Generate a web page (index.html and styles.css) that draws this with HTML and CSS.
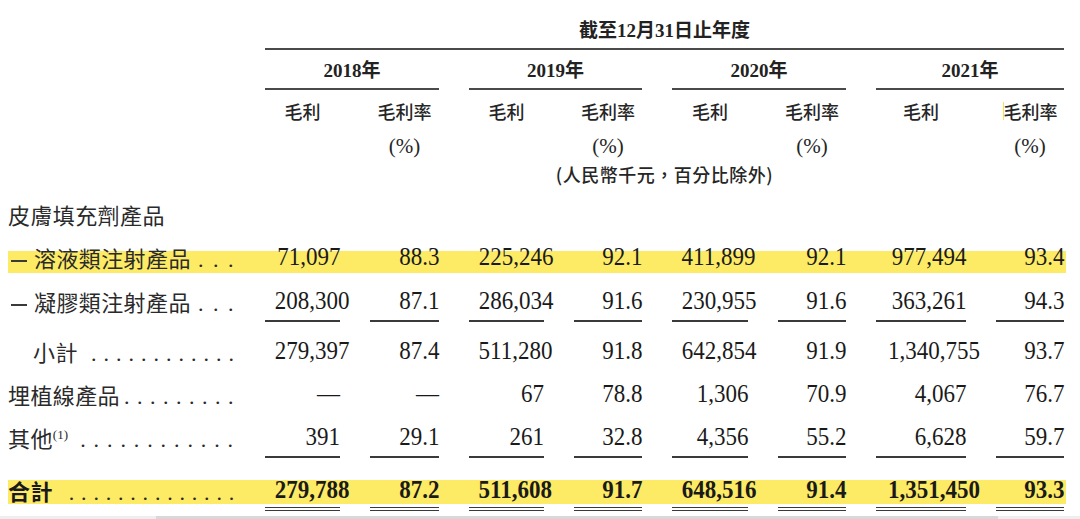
FILE: index.html
```html
<!DOCTYPE html>
<html lang="zh-Hant">
<head>
<meta charset="utf-8">
<title>毛利</title>
<link rel="stylesheet" href="styles.css">
</head>
<body>
<div class="sheet">
  <div class="grid">
    <div class="title">截至12月31日止年度</div>
  </div>
  <div class="grid">
    <div class="yr y18">2018年</div>
    <div class="yr y19">2019年</div>
    <div class="yr y20">2020年</div>
    <div class="yr y21">2021年</div>
  </div>
  <div class="grid sub">
    <div></div>
    <div class="hd">毛利</div><div class="hd">毛利率</div>
    <div class="hd">毛利</div><div class="hd">毛利率</div>
    <div class="hd">毛利</div><div class="hd">毛利率</div>
    <div class="hd">毛利</div><div class="hd"><span class="mark">毛利率</span></div>
  </div>
  <div class="grid pct">
    <div></div>
    <div></div><div class="pc">(%)</div>
    <div></div><div class="pc">(%)</div>
    <div></div><div class="pc">(%)</div>
    <div></div><div class="pc">(%)</div>
  </div>
  <div class="grid rmb-row">
    <div class="rmb">(人民幣千元，百分比除外)</div>
  </div>
  <div class="section">皮膚填充劑產品</div>

  <div class="grid row h44 hl">
    <div class="lab"><span class="t"><span class="dash"></span>溶液類注射產品</span><span class="dots wide">...</span></div>
    <div class="c"><span class="n">71,097</span></div>
    <div class="c"><span class="n">88.3</span></div>
    <div class="c"><span class="n">225,246</span></div>
    <div class="c"><span class="n">92.1</span></div>
    <div class="c"><span class="n">411,899</span></div>
    <div class="c"><span class="n">92.1</span></div>
    <div class="c"><span class="n">977,494</span></div>
    <div class="c"><span class="n">93.4</span></div>
  </div>

  <div class="grid row h50">
    <div class="lab"><span class="t"><span class="dash"></span>凝膠類注射產品</span><span class="dots wide">...</span></div>
    <div class="c u"><span class="n">208,300</span></div>
    <div class="c u"><span class="n">87.1</span></div>
    <div class="c u"><span class="n">286,034</span></div>
    <div class="c u"><span class="n">91.6</span></div>
    <div class="c u"><span class="n">230,955</span></div>
    <div class="c u"><span class="n">91.6</span></div>
    <div class="c u"><span class="n">363,261</span></div>
    <div class="c u"><span class="n">94.3</span></div>
  </div>

  <div class="grid row h43">
    <div class="lab"><span class="t indent">小計</span><span class="dots d125">............</span></div>
    <div class="c"><span class="n">279,397</span></div>
    <div class="c"><span class="n">87.4</span></div>
    <div class="c"><span class="n">511,280</span></div>
    <div class="c"><span class="n">91.8</span></div>
    <div class="c"><span class="n">642,854</span></div>
    <div class="c"><span class="n">91.9</span></div>
    <div class="c"><span class="n">1,340,755</span></div>
    <div class="c"><span class="n">93.7</span></div>
  </div>

  <div class="grid row h43">
    <div class="lab"><span class="t">埋植線產品</span><span class="dots d13">.........</span></div>
    <div class="c"><span class="n">—</span></div>
    <div class="c"><span class="n">—</span></div>
    <div class="c"><span class="n">67</span></div>
    <div class="c"><span class="n">78.8</span></div>
    <div class="c"><span class="n">1,306</span></div>
    <div class="c"><span class="n">70.9</span></div>
    <div class="c"><span class="n">4,067</span></div>
    <div class="c"><span class="n">76.7</span></div>
  </div>

  <div class="grid row h53">
    <div class="lab"><span class="t">其他<sup class="sup">(1)</sup></span><span class="dots d134">............</span></div>
    <div class="c u"><span class="n">391</span></div>
    <div class="c u"><span class="n">29.1</span></div>
    <div class="c u"><span class="n">261</span></div>
    <div class="c u"><span class="n">32.8</span></div>
    <div class="c u"><span class="n">4,356</span></div>
    <div class="c u"><span class="n">55.2</span></div>
    <div class="c u"><span class="n">6,628</span></div>
    <div class="c u"><span class="n">59.7</span></div>
  </div>

  <div class="grid row h48 hl-tot total">
    <div class="lab"><span class="t bold">合計</span><span class="dots d123">..............</span></div>
    <div class="c dbl"><span class="n">279,788</span></div>
    <div class="c dbl"><span class="n">87.2</span></div>
    <div class="c dbl"><span class="n">511,608</span></div>
    <div class="c dbl"><span class="n">91.7</span></div>
    <div class="c dbl"><span class="n">648,516</span></div>
    <div class="c dbl"><span class="n">91.4</span></div>
    <div class="c dbl"><span class="n">1,351,450</span></div>
    <div class="c dbl"><span class="n">93.3</span></div>
  </div>

  <div class="scroll"><div class="thumb"></div></div>
</div>
</body>
</html>
```

FILE: styles.css
```css
html, body {
  margin: 0;
  padding: 0;
  background: #ffffff;
}

body {
  color: #1c1c1c;
  font-family: "Liberation Serif", "Noto Sans CJK TC", serif;
}

.sheet {
  width: 1080px;
  height: 519px;
  overflow: hidden;
}

.grid {
  display: grid;
  grid-template-columns: 227px 75px 69px 75px 68px 76px 68px 90px 68px;
  column-gap: 30px;
  margin-left: 8px;
  width: 1056px;
  padding-right: 2px;
}

/* header */
.title {
  grid-column: 2 / -1;
  padding-top: 14px;
  line-height: 34px;
  border-bottom: 2px solid #4a4a4a;
  text-align: center;
  font-family: "Liberation Serif", "Noto Sans CJK TC", serif;
  font-weight: 700;
  font-size: 19px;
  color: #222;
}

.yr {
  padding-top: 4px;
  line-height: 34px;
  border-bottom: 2px solid #4a4a4a;
  text-align: center;
  font-family: "Liberation Serif", "Noto Sans CJK TC", serif;
  font-weight: 700;
  font-size: 19px;
  color: #222;
}

.y18 { grid-column: 2 / 4; }
.y19 { grid-column: 4 / 6; }
.y20 { grid-column: 6 / 8; }
.y21 { grid-column: 8 / 10; }

.sub .hd {
  line-height: 42px;
  text-align: center;
  font-family: "Noto Sans CJK TC", sans-serif;
  font-weight: 500;
  font-size: 18px;
  color: #262626;
}

.mark {
  display: inline-block;
  line-height: 18px;
  border-left: 1px solid #f2e25c;
}

.pct .pc {
  line-height: 28px;
  text-align: center;
  font-family: "Liberation Serif", serif;
  font-size: 21px;
  color: #262626;
}

.rmb {
  grid-column: 2 / -1;
  line-height: 28px;
  text-align: center;
  font-family: "Noto Sans CJK TC", sans-serif;
  font-weight: 500;
  font-size: 18px;
  letter-spacing: 0.5px;
  color: #262626;
}

.section {
  margin-left: 8px;
  padding-top: 5px;
  line-height: 42px;
  height: 42px;
  font-family: "Noto Sans CJK TC", sans-serif;
  font-size: 22px;
  letter-spacing: 0.4px;
  color: #2a2a2a;
}

/* data rows */
.h44 { height: 44px; }
.h50 { height: 50px; }
.h43 { height: 43px; }
.h53 { height: 53px; }
.h48 { height: 48px; }

.hl {
  background: linear-gradient(to bottom, transparent 16px, #fdeb66 16px, #fdeb66 38px, transparent 38px);
}

.hl-tot {
  background: linear-gradient(to bottom, transparent 12px, #fdeb66 12px, #fdeb66 36px, transparent 36px);
}

.lab {
  display: flex;
  justify-content: space-between;
  align-items: baseline;
  margin-top: 9px;
  height: 26px;
  line-height: 26px;
  white-space: nowrap;
}

.t {
  font-family: "Noto Sans CJK TC", sans-serif;
  font-size: 22px;
  letter-spacing: 0.4px;
  color: #2a2a2a;
}

.t.bold {
  font-weight: 700;
  color: #1a1a1a;
}

.indent {
  padding-left: 25px;
}

.dash {
  display: inline-block;
  width: 16px;
  height: 2px;
  background: #3a3a3a;
  vertical-align: middle;
  margin: 0 7px 0 3px;
}

.sup {
  font-family: "Liberation Serif", serif;
  font-size: 13px;
  line-height: 0;
  vertical-align: 8px;
  letter-spacing: 0;
}

.dots {
  font-family: "Liberation Serif", serif;
  font-size: 22px;
  color: #2a2a2a;
  letter-spacing: 7.5px;
  margin-right: -6px;
}

.dots.wide { letter-spacing: 9.5px; margin-right: -8px; }
.dots.d125 { letter-spacing: 7px; }
.dots.d13 { letter-spacing: 7.5px; }
.dots.d134 { letter-spacing: 7.9px; }
.dots.d123 { letter-spacing: 6.8px; }

.c {
  margin-top: 9px;
  line-height: 26px;
  height: 26px;
  text-align: right;
  font-family: "Liberation Serif", serif;
  font-size: 26px;
  color: #1a1a1a;
  white-space: nowrap;
}

.n {
  display: inline-block;
  transform: scaleX(0.885);
  transform-origin: right center;
}

.c.u {
  padding-bottom: 6px;
  border-bottom: 2px solid #3a3a3a;
}

.total .c {
  font-weight: 700;
}

.c.dbl {
  padding-bottom: 4px;
  border-bottom: 4px double #3a3a3a;
}

/* horizontal scroll bar at the bottom */
.scroll {
  height: 3px;
  background: #eeeeee;
  padding-left: 156px;
}

.thumb {
  width: 842px;
  height: 3px;
  background: #d8d8d8;
}
```
